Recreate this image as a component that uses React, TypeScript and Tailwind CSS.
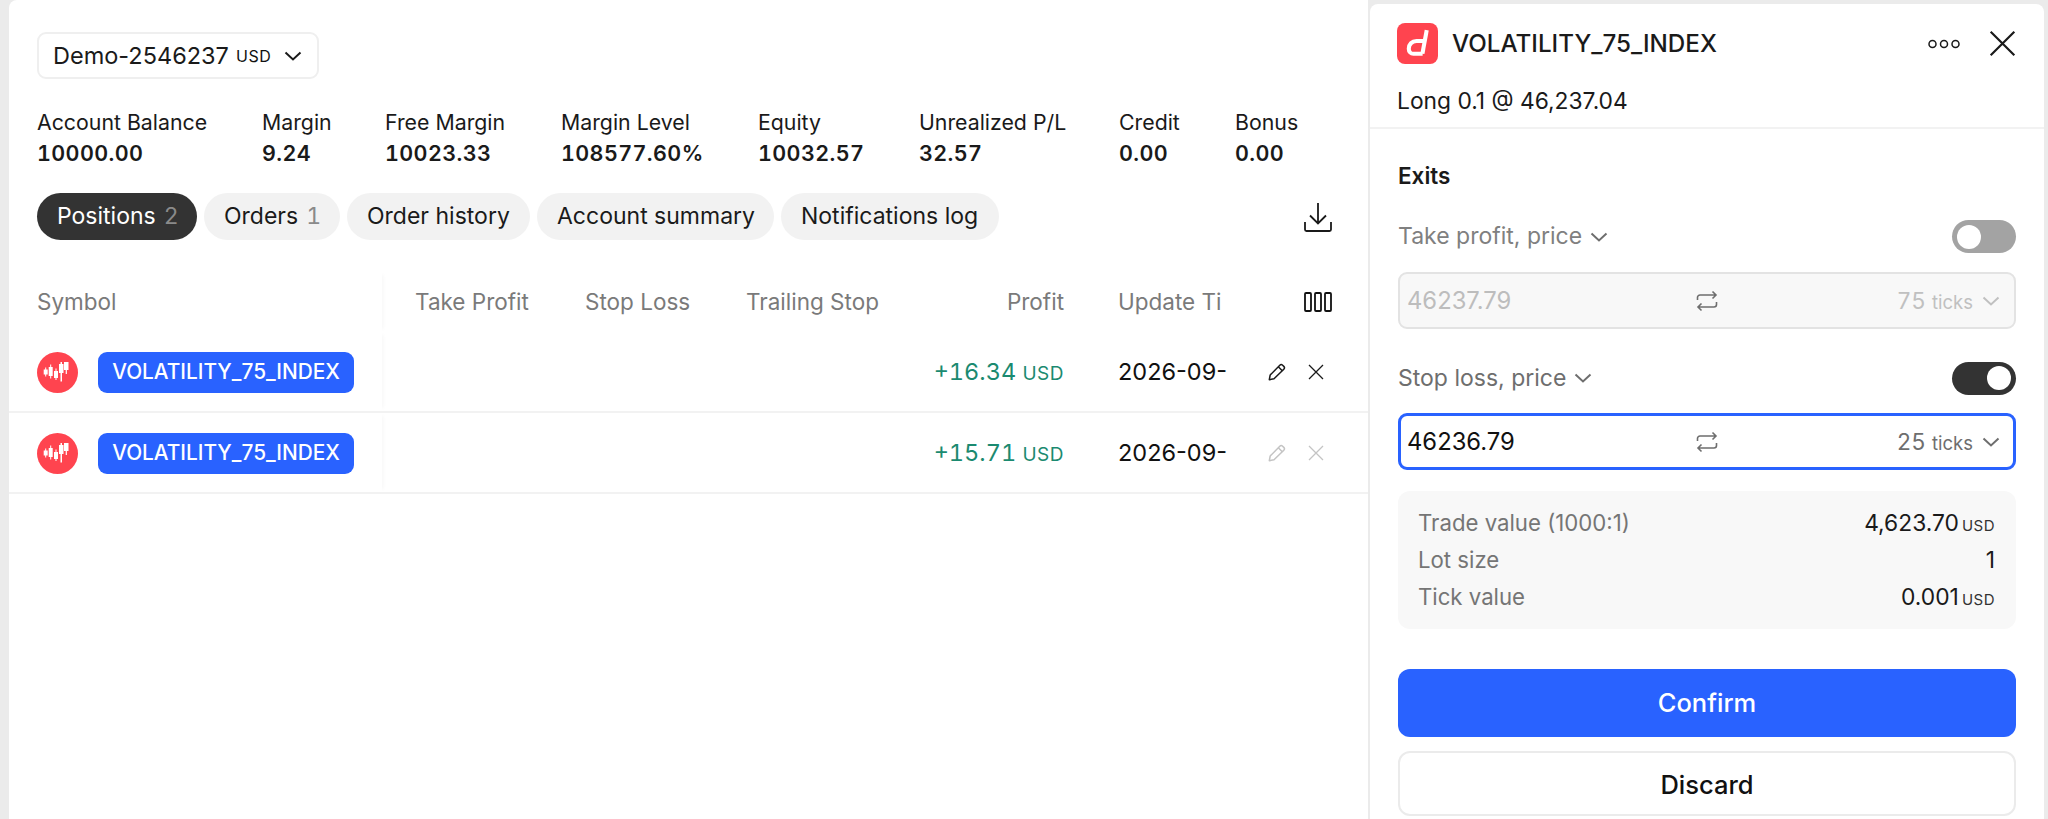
import React from "react";

const Chevron = ({ className }: { className: string }) => (
  <svg viewBox="0 0 18 10" fill="none" stroke="currentColor" strokeWidth="2" className={className}>
    <path d="M1.5 1.5 9 8.5l7.5-7" />
  </svg>
);

const Repeat = ({ className }: { className: string }) => (
  <svg viewBox="0 0 22 22" fill="none" stroke="currentColor" strokeWidth="1.6" className={className}>
    <path d="M1.5 10V7.5a2.5 2.5 0 0 1 2.5-2.5h16M16.5 1.5 20 5l-3.5 3.5" />
    <path d="M20.5 12v2.5a2.5 2.5 0 0 1-2.5 2.5H2M5.5 13.5 2 17l3.500 3.500" />
  </svg>
);

const Pencil = ({ className }: { className: string }) => (
  <svg viewBox="0 0 18 18" fill="none" stroke="currentColor" strokeWidth="1.5" strokeLinejoin="round" className={className}>
    <path d="M1.300 16.700 2.200 12 11.800 2.200a2 2 0 0 1 2.800 0l1.200 1.200a2 2 0 0 1 0 2.800L6 15.800z" />
    <path d="m10.300 3.800 4 4" />
  </svg>
);

const Cross = ({ className }: { className: string }) => (
  <svg viewBox="0 0 16 16" fill="none" stroke="currentColor" strokeWidth="1.300" className={className}>
    <path d="M1 1l14 14M15 1 1 15" />
  </svg>
);

const Candles = () => (
  <svg viewBox="0 0 41 41" className="w-[41px] h-[41px] shrink-0">
    <circle cx="20.500" cy="20.500" r="20.500" fill="#ff444f" />
    <g fill="#fff">
      <rect x="6.700" y="17.500" width="4" height="5" />
      <rect x="8.200" y="15.500" width="1" height="9" />
      <rect x="11.700" y="15" width="4" height="9" />
      <rect x="13.200" y="12.500" width="1" height="14" />
      <rect x="17" y="19" width="4" height="7" />
      <rect x="18.500" y="16.500" width="1" height="11.500" />
      <rect x="22" y="12" width="4.500" height="9" />
      <rect x="23.500" y="10" width="1.500" height="19.500" />
      <rect x="27" y="10" width="4.500" height="8" />
      <rect x="28.700" y="10" width="1.200" height="12" />
    </g>
  </svg>
);

const stats = [
  ["Account Balance", "10000.00", "w-[225px]"],
  ["Margin", "9.24", "w-[123px]"],
  ["Free Margin", "10023.33", "w-[176px]"],
  ["Margin Level", "108577.60%", "w-[197px]"],
  ["Equity", "10032.57", "w-[161px]"],
  ["Unrealized P/L", "32.57", "w-[200px]"],
  ["Credit", "0.00", "w-[116px]"],
  ["Bonus", "0.00", "w-[100px]"],
];

const tabs: [string, string | null, string][] = [
  ["Positions", "2", "w-[160px] bg-[#333333] text-white"],
  ["Orders", "1", "w-[136px] bg-[#f2f2f2] text-[#1a1a1a]"],
  ["Order history", null, "w-[183px] bg-[#f2f2f2] text-[#1a1a1a]"],
  ["Account summary", null, "w-[237px] bg-[#f2f2f2] text-[#1a1a1a]"],
  ["Notifications log", null, "w-[218px] bg-[#f2f2f2] text-[#1a1a1a]"],
];

const Row = ({ profit, dim }: { profit: string; dim?: boolean }) => (
  <div className="flex h-[81px] items-center border-b-[2px] border-[#f2f2f2]">
    <div className="w-[373px] h-full flex items-center gap-[20px] pl-[28px] pt-[1px] shrink-0 shadow-[4px_0_4px_-3px_rgba(0,0,0,0.04)]">
      <Candles />
      <div className="w-[256px] h-[41px] rounded-[9px] bg-[#2962ff] text-white text-[20.800px] font-medium flex items-center justify-center">
        VOLATILITY_75_INDEX
      </div>
    </div>
    <div className="w-[523px] shrink-0" />
    <div className="w-[181px] shrink-0 text-right pr-[22px] text-[#1b8a70] text-[23.500px] tabular-nums whitespace-nowrap">
      {profit} <span className="text-[19px] tracking-[0.5px]">USD</span>
    </div>
    <div className="w-[168px] shrink-0 pl-[32px] text-[23.500px] text-[#111111] whitespace-nowrap">2026-09-</div>
    <div className={`flex items-center gap-[22px] pl-[14px] ${dim ? "text-[#c4c4c4]" : "text-[#1a1a1a]"}`}>
      <Pencil className="w-[18px] h-[18px]" />
      <Cross className="w-[16px] h-[16px]" />
    </div>
  </div>
);

const InputRow = ({ value, ticks, active }: { value: string; ticks: string; active?: boolean }) => (
  <div
    className={`mx-[28px] h-[57px] rounded-[9px] flex items-center ${
      active ? "border-[3px] border-[#2962ff] bg-white pl-[6px] pr-[13px]" : "border-[2px] border-[#e3e3e3] bg-[#f8f8f8] pl-[7px] pr-[14px]"
    }`}
  >
    <span className={`w-[289px] text-[23.800px] ${active ? "text-[#111111]" : "text-[#bdbdbd]"}`}>{value}</span>
    <Repeat className="w-[22px] h-[22px] text-[#6e6e6e]" />
    <span className={`ml-auto flex items-baseline gap-[6px] ${active ? "text-[#6e6e6e]" : "text-[#c0c0c0]"}`}>
      <span className="text-[22.500px] tabular-nums">{ticks}</span>
      <span className="text-[18.500px]">ticks</span>
    </span>
    <Chevron className={`w-[18px] h-[10px] ml-[9px] ${active ? "text-[#6e6e6e]" : "text-[#c0c0c0]"}`} />
  </div>
);

const Toggle = ({ on }: { on?: boolean }) => (
  <div className={`w-[64px] h-[33px] rounded-full flex items-center px-[5px] ${on ? "bg-[#333333] justify-end" : "bg-[#a3a3a3] justify-start"}`}>
    <div className="w-[24px] h-[24px] rounded-full bg-white" />
  </div>
);

const InfoRow = ({ label, value, unit }: { label: string; value: string; unit?: boolean }) => (
  <div className="flex items-baseline justify-between h-[37px] leading-[37px]">
    <span className="text-[#757575] text-[22.200px]">{label}</span>
    <span className="text-[#1a1a1a] text-[22.800px]">
      {value}
      {unit && <span className="text-[15px] text-[#333333] tracking-[0.5px] ml-[3px]">USD</span>}
    </span>
  </div>
);

export default function App() {
  return (
    <div className="w-[2048px] h-[819px] overflow-hidden bg-[#ebebeb] flex pl-[9px] pr-[4px] gap-[2px] font-['Inter',sans-serif] text-[#111111]">
      <div className="w-[1359px] shrink-0 h-full bg-white rounded-tl-[8px]">
        <div className="pl-[28px] pt-[32px] pr-[36px]">
          <div className="w-[282px] h-[47px] border-[2px] border-[#efefef] rounded-[9px] flex items-center pl-[14px]">
            <span className="text-[23.500px] text-[#1a1a1a]">Demo-2546237</span>
            <span className="text-[16px] ml-[7px] tracking-[0.6px]">USD</span>
            <Chevron className="w-[18px] h-[10px] ml-[13px] text-[#1a1a1a]" />
          </div>
          <div className="flex mt-[28px]">
            {stats.map(([l, v, w]) => (
              <div key={l} className={`${w} shrink-0`}>
                <div className="text-[21.300px] leading-[31px] text-[#1a1a1a] whitespace-nowrap">{l}</div>
                <div className="text-[21.500px] leading-[30px] font-semibold text-[#1a1a1a] tabular-nums tracking-[0.4px] whitespace-nowrap">{v}</div>
              </div>
            ))}
          </div>
          <div className="flex items-center gap-[7px] mt-[25px]">
            {tabs.map(([t, n, c]) => (
              <div key={t} className={`h-[47px] rounded-full pl-[20px] flex items-center gap-[8px] text-[23px] whitespace-nowrap ${c}`}>
                {t}
                {n && <span className="text-[#8a8a8a] tabular-nums">{n}</span>}
              </div>
            ))}
            <svg viewBox="0 0 28 30" fill="none" stroke="#1a1a1a" strokeWidth="1.800" className="w-[28px] h-[30px] ml-auto">
              <path d="M14 1v20M6 13.500l8 8 8-8" />
              <path d="M1 20v7.500a1.500 1.500 0 0 0 1.500 1.500h23a1.500 1.500 0 0 0 1.500-1.500V20" />
            </svg>
          </div>
        </div>
        <div className="mt-[32px]">
          <div className="flex h-[60px] items-center text-[22.500px] text-[#7a7a7a]">
            <div className="w-[373px] h-full flex items-center pl-[28px] shrink-0 shadow-[4px_0_4px_-3px_rgba(0,0,0,0.04)]">Symbol</div>
            <div className="w-[170px] pl-[33px] shrink-0 whitespace-nowrap">Take Profit</div>
            <div className="w-[161px] pl-[33px] shrink-0 whitespace-nowrap">Stop Loss</div>
            <div className="w-[192px] pl-[33px] shrink-0 whitespace-nowrap">Trailing Stop</div>
            <div className="w-[181px] shrink-0 text-right pr-[22px]">Profit</div>
            <div className="w-[168px] shrink-0 pl-[32px] whitespace-nowrap">Update Ti</div>
            <svg viewBox="0 0 28 20" fill="none" stroke="#111111" strokeWidth="1.800" className="w-[28px] h-[20px] ml-[50px]">
              <rect x="1" y="1" width="6" height="18" rx="1" />
              <rect x="11" y="1" width="6" height="18" rx="1" />
              <rect x="21" y="1" width="6" height="18" rx="1" />
            </svg>
          </div>
          <Row profit="+16.34" />
          <Row profit="+15.71" dim />
        </div>
      </div>
      <div className="flex-1 h-[815px] mt-[4px] bg-white rounded-t-[8px]">
        <div className="h-[125px] border-b-[2px] border-[#f2f2f2] px-[27px] pt-[19px]">
          <div className="flex items-center h-[41px]">
            <div className="w-[41px] h-[41px] rounded-[8px] bg-[#ff444f] flex items-center justify-center shrink-0">
              <svg viewBox="0 0 40 40" fill="none" stroke="#fff" strokeWidth="4" className="w-[41px] h-[41px]">
                <path d="M29 7 24.800 30" />
                <path d="M25.500 17.500H19C14.500 17.500 11.500 21 11.500 25 11.500 28 13.500 30 16 30H25" />
              </svg>
            </div>
            <span className="ml-[14px] mt-[2px] text-[24.200px] font-medium text-[#1a1a1a]">VOLATILITY_75_INDEX</span>
            <svg viewBox="0 0 32 10" fill="none" stroke="#1a1a1a" strokeWidth="1.500" className="w-[32px] h-[10px] ml-auto">
              <circle cx="4.500" cy="5" r="3.500" />
              <circle cx="16" cy="5" r="3.500" />
              <circle cx="27.500" cy="5" r="3.500" />
            </svg>
            <Cross className="w-[27px] h-[27px] ml-[29px] mr-[1px] text-[#1a1a1a]" />
          </div>
          <div className="mt-[22px] text-[22.800px] leading-[30px] text-[#1a1a1a]">Long 0.1 @ 46,237.04</div>
        </div>
        <div className="pl-[28px] mt-[32px] text-[22.500px] leading-[30px] font-semibold text-[#1a1a1a]">Exits</div>
        <div className="flex items-center justify-between mx-[28px] mt-[29px] h-[33px]">
          <div className="flex items-center gap-[8px] text-[23px] text-[#808080]">
            Take profit, price
            <Chevron className="w-[18px] h-[10px] text-[#6e6e6e]" />
          </div>
          <Toggle />
        </div>
        <div className="mt-[19px]">
          <InputRow value="46237.79" ticks="75" />
        </div>
        <div className="flex items-center justify-between mx-[28px] mt-[32px] h-[34px]">
          <div className="flex items-center gap-[8px] text-[23px] text-[#6e6e6e]">
            Stop loss, price
            <Chevron className="w-[18px] h-[10px] text-[#6e6e6e]" />
          </div>
          <Toggle on />
        </div>
        <div className="mt-[18px]">
          <InputRow value="46236.79" ticks="25" active />
        </div>
        <div className="mx-[28px] mt-[21px] h-[138px] rounded-[12px] bg-[#f8f8f8] pl-[20px] pr-[21px] py-[13px]">
          <InfoRow label="Trade value (1000:1)" value="4,623.70" unit />
          <InfoRow label="Lot size" value="1" />
          <InfoRow label="Tick value" value="0.001" unit />
        </div>
        <div className="mx-[28px] mt-[40px] h-[68px] rounded-[12px] bg-[#2962ff] text-white text-[25.500px] font-medium flex items-center justify-center">Confirm</div>
        <div className="mx-[28px] mt-[14px] h-[65px] pt-[4px] rounded-[12px] border-[2px] border-[#ebebeb] text-[#111111] text-[25.500px] font-medium flex items-center justify-center">Discard</div>
      </div>
    </div>
  );
}
